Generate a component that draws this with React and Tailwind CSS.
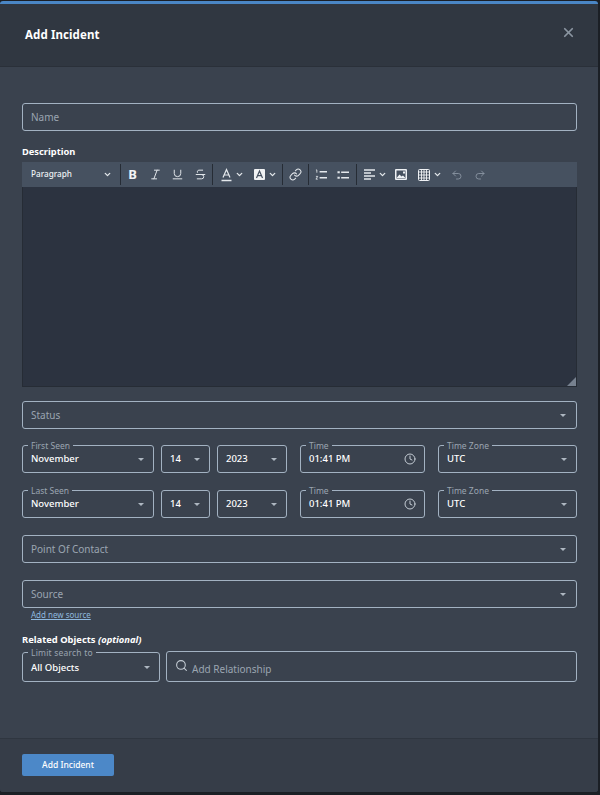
import React from "react";
import { Search, Clock, ChevronDown, X, Italic, Underline, Strikethrough, Link, Undo2, Redo2 } from "lucide-react";

const labelColor = "text-[#9aa5b1]";
const boxBorder = "border border-[#a3b2c2] rounded-[3px]";

function Caret({ className = "" }) {
  return <span className={`w-0 h-0 border-x-[3px] border-x-transparent border-t-[3px] border-t-[#aeb7c1] ${className}`} />;
}

function Chevron() {
  return <ChevronDown className="w-[9px] h-[9px] text-[#e4e8ec]" strokeWidth={3.5} />;
}

function Divider() {
  return <span className="w-px h-[21px] bg-[#262c35]" />;
}

function PlainField({ label, caret, className = "" }) {
  return (
    <div className={`h-[28px] flex items-center justify-between pl-[8px] pr-[10px] ${boxBorder} ${className}`}>
      <span className={`text-[10px] pt-px ${labelColor}`}>{label}</span>
      {caret && <Caret />}
    </div>
  );
}

function LegendField({ legend, value, width, icon }) {
  return (
    <div className={`relative h-[28px] flex items-center justify-between pl-[8px] pr-[9px] ${boxBorder} ${width}`}>
      {legend && (
        <span className={`absolute left-[5px] -top-[5px] px-[3px] leading-[10px] bg-[#3a424e] text-[8.5px] ${labelColor}`}>
          {legend}
        </span>
      )}
      <span className="text-[9.5px] font-medium text-white pt-px">{value}</span>
      {icon || <Caret />}
    </div>
  );
}

function DateRow({ legend }) {
  return (
    <div className="flex">
      <div className="flex">
        <LegendField legend={legend} value="November" width="w-[132px]" />
        <div className="ml-[7px] mr-[7px]">
          <LegendField value="14" width="w-[49px]" />
        </div>
        <LegendField value="2023" width="w-[70px]" />
      </div>
      <div className="ml-[13px] mr-[13px]">
        <LegendField
          legend="Time"
          value="01:41 PM"
          width="w-[125px]"
          icon={<Clock className="w-[12px] h-[12px] text-[#c4ccd4] -mr-[1px]" strokeWidth={2} />}
        />
      </div>
      <LegendField legend="Time Zone" value="UTC" width="w-[139px]" />
    </div>
  );
}

function Toolbar() {
  const icon = "w-[13px] h-[13px] text-[#e4e8ec]";
  return (
    <div className="h-[25px] bg-[#465160] flex items-center text-[#e4e8ec]">
      <div className="w-[98px] pl-[9px] pr-[8px] flex items-center justify-between">
        <span className="text-[8.2px] font-medium text-[#eef1f4]">Paragraph</span>
        <Chevron />
      </div>
      <Divider />
      <div className="flex items-center gap-[9.5px] pl-[5px] pr-[5px]">
        <span className="w-[13px] text-center text-[13px] leading-none font-bold text-[#f2f4f6]">B</span>
        <Italic className={icon} strokeWidth={1.8} />
        <Underline className={icon} strokeWidth={1.8} />
        <Strikethrough className={icon} strokeWidth={1.8} />
      </div>
      <Divider />
      <div className="flex items-center pl-[7px] pr-[5px] gap-[2px]">
        <svg className="w-[13px] h-[14px]" viewBox="0 0 13 14" fill="none" stroke="currentColor" strokeWidth="1.2">
          <path d="M3 9.5 6.5 1.5 10 9.5M4.2 7h4.6" />
          <path d="M1.5 12.5h10" strokeWidth="1.5" />
        </svg>
        <Chevron />
        <svg className="w-[13px] h-[13px] ml-[7px]" viewBox="0 0 13 13">
          <rect x="1" y="1" width="11" height="11" rx="1" fill="#f0f2f4" />
          <path d="M3.5 10 6.5 3 9.5 10M4.6 7.6h3.8" fill="none" stroke="#465160" strokeWidth="1.2" />
        </svg>
        <Chevron />
      </div>
      <Divider />
      <div className="px-[6px]">
        <Link className={icon} strokeWidth={1.9} />
      </div>
      <Divider />
      <div className="flex items-center gap-[10px] pl-[6px] pr-[7px]">
        <svg className="w-[12px] h-[12px]" viewBox="0 0 13 13" stroke="currentColor" fill="none">
          <path d="M5 3h8M5 9.500h8" strokeWidth="1.4" />
          <path d="M1 1h1v3M1 8h2L1 11h2" strokeWidth="0.9" />
        </svg>
        <svg className="w-[12px] h-[12px]" viewBox="0 0 13 13" stroke="currentColor" fill="none">
          <path d="M4.500 3.500h8.500M4.500 9.500h8.500" strokeWidth="1.4" />
          <path d="M0.500 3.500h2.500M0.500 9.500h2.500" strokeWidth="2" />
        </svg>
      </div>
      <Divider />
      <div className="flex items-center pl-[7px]">
        <svg className="w-[11px] h-[11px]" viewBox="0 0 11 11" stroke="currentColor">
          <path d="M0 1h11M0 4h7M0 7h11M0 10h7" strokeWidth="1.3" />
        </svg>
        <span className="ml-[3px]"><Chevron /></span>
        <svg className="w-[12px] h-[11px] ml-[8px]" viewBox="0 0 12 11">
          <rect x="0" y="0" width="12" height="11" rx="1" fill="#eef1f4" />
          <rect x="1.500" y="1.500" width="9" height="8" fill="#465160" />
          <path d="M1.500 9 4.500 5.500 6.500 7.500 8 6.500 10.500 9ZM8 2.500h2v2H8Z" fill="#eef1f4" />
        </svg>
        <svg className="w-[12px] h-[12px] ml-[11px]" viewBox="0 0 12 12" fill="none" stroke="#eef1f4">
          <rect x="0.500" y="0.500" width="11" height="11" rx="1" />
          <path d="M0 3h12M0 6h12M0 9h12M3.500 0v12M6 0v12M8.500 0v12" strokeWidth="0.9" />
        </svg>
        <span className="ml-[3px]"><Chevron /></span>
        <Undo2 className="w-[12px] h-[12px] ml-[9px] text-[#8a95a3]" strokeWidth={1.8} />
        <Redo2 className="w-[12px] h-[12px] ml-[11px] text-[#8a95a3]" strokeWidth={1.8} />
      </div>
    </div>
  );
}

export default function App() {
  return (
    <div className="w-[600px] h-[795px] bg-[#1b1f25] pt-[1px] font-['Noto_Sans','Open_Sans',sans-serif]">
      <div className="w-[598px] h-[791px] flex flex-col bg-[#3a424e] rounded-[3px] overflow-hidden border-t-[3px] border-t-[#4a86c5]">
        <div className="h-[63px] shrink-0 flex items-center justify-between pl-[25px] pr-[22px] bg-[#303741] border-b border-[#2a3039]">
          <h1 className="text-[11.5px] font-bold text-white tracking-[0.1px]">Add Incident</h1>
          <X className="w-[15px] h-[15px] text-[#8b95a1] -mt-[5px]" strokeWidth={2.8} />
        </div>

        <div className="flex-1 pl-[22px] pr-[21px] pt-[36px]">
          <PlainField label="Name" />

          <div className="mt-[14px] text-[9.3px] font-bold text-white leading-[13px]">Description</div>
          <div className="mt-[4px]">
            <Toolbar />
            <div className="relative h-[200px] bg-[#2c3340] border-x border-b border-[#262c35]">
              <span className="absolute right-0 bottom-0 w-0 h-0 border-l-[9px] border-l-transparent border-b-[9px] border-b-[#77818f]" />
            </div>
          </div>

          <PlainField label="Status" caret className="mt-[14px]" />

          <div className="mt-[16px] flex flex-col gap-[17px]">
            <DateRow legend="First Seen" />
            <DateRow legend="Last Seen" />
          </div>

          <PlainField label="Point Of Contact" caret className="mt-[17px]" />
          <PlainField label="Source" caret className="mt-[17px]" />

          <a className="block mt-[1px] ml-[9px] text-[8px] leading-[11px] text-[#8fb8de] underline">Add new source</a>

          <div className="mt-[13px] text-[9.4px] font-bold text-white leading-[13px]">
            Related Objects <em className="font-bold italic">(optional)</em>
          </div>

          <div className="mt-[5px] flex gap-[6px] items-end">
            <div className={`relative w-[138px] h-[30px] flex items-center justify-between pl-[8px] pr-[9px] ${boxBorder}`}>
              <span className={`absolute left-[5px] -top-[5px] px-[3px] leading-[10px] bg-[#3a424e] text-[8.5px] tracking-[0.2px] ${labelColor}`}>
                Limit search to
              </span>
              <span className="text-[9.5px] font-medium text-white pt-[3px]">All Objects</span>
              <Caret />
            </div>
            <div className={`flex-1 h-[31px] flex items-center pl-[8px] gap-[4px] ${boxBorder}`}>
              <Search className="w-[13px] h-[13px] text-[#c4ccd4] -mt-[3px]" strokeWidth={2} />
              <span className={`text-[10px] pt-[6px] ${labelColor}`}>Add Relationship</span>
            </div>
          </div>
        </div>

        <div className="h-[54px] shrink-0 pl-[22px] pt-[15px] bg-[#363d48] border-t border-[#2f3640]">
          <button className="block w-[92px] h-[22px] rounded-[2px] bg-[#4c88c8] text-[8.5px] font-medium text-white">
            Add Incident
          </button>
        </div>
      </div>
    </div>
  );
}
